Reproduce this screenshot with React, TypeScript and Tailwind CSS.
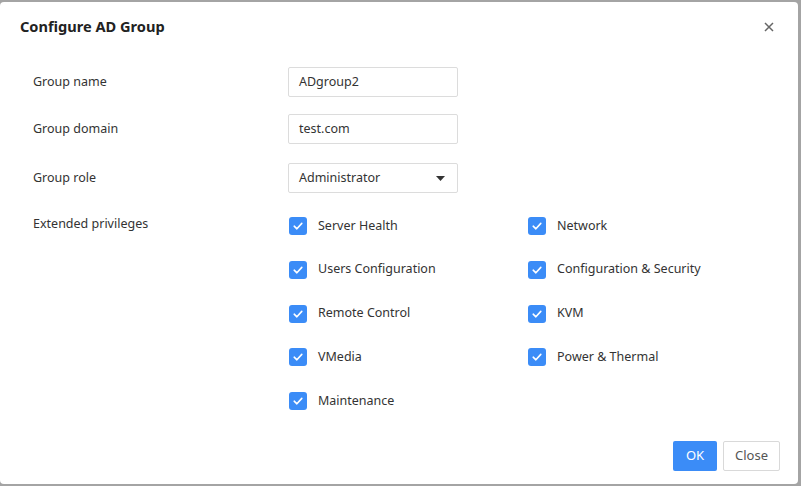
import React from "react";

const font = { fontFamily: '"Segoe UI", "Noto Sans", "Liberation Sans", Arial, sans-serif' };

function Check({ label }: { label: string }) {
  return (
    <div className="flex items-center h-[18px]">
      <span className="w-[18px] h-[18px] rounded-[3px] bg-[#3b8cf7] flex items-center justify-center">
        <svg width="12" height="12" viewBox="0 0 12 12" fill="none">
          <path d="M2.2 6.2 L4.9 8.8 L9.8 3.4" stroke="#fff" strokeWidth="1.6" strokeLinecap="round" strokeLinejoin="round" />
        </svg>
      </span>
      <span className="ml-[11px] text-[12.5px] text-[#333]">{label}</span>
    </div>
  );
}

export default function App() {
  const left = ["Server Health", "Users Configuration", "Remote Control", "VMedia", "Maintenance"];
  const right = ["Network", "Configuration & Security", "KVM", "Power & Thermal"];
  return (
    <div className="w-[801px] h-[486px] bg-[#a4a4a4] pt-[2px] pr-[3px] pb-[2px]" style={font}>
      <div className="bg-white rounded-[4px] h-full flex flex-col relative">
        <div className="h-[50px] flex items-center justify-between pl-[20px] pr-[24px]">
          <span className="text-[14.6px] font-bold text-[#222]">Configure AD Group</span>
          <svg width="10" height="10" viewBox="0 0 10 10">
            <path d="M1 1 L9 9 M9 1 L1 9" stroke="#666" strokeWidth="1.5" />
          </svg>
        </div>
        <div className="pl-[33px] pt-[15px]">
          <div className="flex items-center h-[30px]">
            <span className="w-[255px] text-[12.5px] text-[#333]">Group name</span>
            <div className="w-[170px] h-[30px] border border-[#dcdcdc] rounded-[2px] flex items-center px-[10px] text-[12.5px] text-[#333]">ADgroup2</div>
          </div>
          <div className="flex items-center h-[30px] mt-[17px]">
            <span className="w-[255px] text-[12.5px] text-[#333]">Group domain</span>
            <div className="w-[170px] h-[30px] border border-[#dcdcdc] rounded-[2px] flex items-center px-[10px] text-[12.5px] text-[#333]">test.com</div>
          </div>
          <div className="flex items-center h-[30px] mt-[19px]">
            <span className="w-[255px] text-[12.5px] text-[#333]">Group role</span>
            <div className="w-[170px] h-[30px] border border-[#dcdcdc] rounded-[2px] flex items-center justify-between pl-[10px] pr-[12px] text-[12.5px] text-[#333]">
              <span>Administrator</span>
              <svg width="9" height="5" viewBox="0 0 9 5"><path d="M0 0 L9 0 L4.5 5 Z" fill="#333" /></svg>
            </div>
          </div>
          <div className="flex mt-[24px]">
            <span className="w-[256px] text-[12.5px] text-[#333] leading-[18px] -mt-[2px]">Extended privileges</span>
            <div className="flex">
              <div className="w-[239px] flex flex-col gap-[25.75px]">
                {left.map((l) => <Check key={l} label={l} />)}
              </div>
              <div className="flex flex-col gap-[25.75px]">
                {right.map((l) => <Check key={l} label={l} />)}
              </div>
            </div>
          </div>
        </div>
        <div className="absolute right-[18px] bottom-[13px] flex gap-[6px]">
          <button className="w-[44px] h-[30px] rounded-[2px] bg-[#3b8cf7] text-white text-[13px]">OK</button>
          <button className="w-[57px] h-[30px] rounded-[2px] border border-[#d9d9d9] bg-white text-[#555] text-[13px]">Close</button>
        </div>
      </div>
    </div>
  );
}
